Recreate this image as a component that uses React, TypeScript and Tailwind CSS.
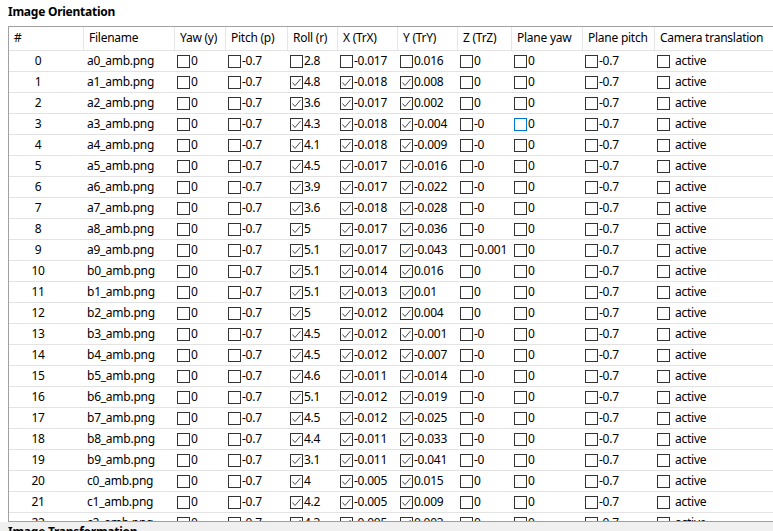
import React from "react";

type Row = [string, string, string, string, string];

// filename prefix, roll, X, Y, Z
const rows: Row[] = [
  ["a0", "2.8", "-0.017", "0.016", "0"],
  ["a1", "4.8", "-0.018", "0.008", "0"],
  ["a2", "3.6", "-0.017", "0.002", "0"],
  ["a3", "4.3", "-0.018", "-0.004", "-0"],
  ["a4", "4.1", "-0.018", "-0.009", "-0"],
  ["a5", "4.5", "-0.017", "-0.016", "-0"],
  ["a6", "3.9", "-0.017", "-0.022", "-0"],
  ["a7", "3.6", "-0.018", "-0.028", "-0"],
  ["a8", "5", "-0.017", "-0.036", "-0"],
  ["a9", "5.1", "-0.017", "-0.043", "-0.001"],
  ["b0", "5.1", "-0.014", "0.016", "0"],
  ["b1", "5.1", "-0.013", "0.01", "0"],
  ["b2", "5", "-0.012", "0.004", "0"],
  ["b3", "4.5", "-0.012", "-0.001", "-0"],
  ["b4", "4.5", "-0.012", "-0.007", "-0"],
  ["b5", "4.6", "-0.011", "-0.014", "-0"],
  ["b6", "5.1", "-0.012", "-0.019", "-0"],
  ["b7", "4.5", "-0.012", "-0.025", "-0"],
  ["b8", "4.4", "-0.011", "-0.033", "-0"],
  ["b9", "3.1", "-0.011", "-0.041", "-0"],
  ["c0", "4", "-0.005", "0.015", "0"],
  ["c1", "4.2", "-0.005", "0.009", "0"],
  ["c2", "4.3", "-0.005", "0.003", "0"],
];

const headers = [
  "#",
  "Filename",
  "Yaw (y)",
  "Pitch (p)",
  "Roll (r)",
  "X (TrX)",
  "Y (TrY)",
  "Z (TrZ)",
  "Plane yaw",
  "Plane pitch",
  "Camera translation",
];

const gridCols =
  "grid grid-cols-[75px_91px_51px_62px_50px_60px_60px_54px_71px_72px_140px]";

function Box({ checked = false, focus = false }: { checked?: boolean; focus?: boolean }) {
  return (
    <span
      className={
        "w-[13px] h-[13px] shrink-0 bg-white border flex items-center justify-center " +
        (focus ? "border-[#0078d7]" : "border-[#333333]")
      }
    >
      {checked && (
        <svg width="11" height="11" viewBox="0 0 11 11">
          <polyline
            points="1.5,5.5 4,8.5 9.5,2"
            fill="none"
            stroke="#4a4a4a"
            strokeWidth="1"
          />
        </svg>
      )}
    </span>
  );
}

function CheckCell({
  value,
  checked,
  focus,
}: {
  value: string;
  checked?: boolean;
  focus?: boolean;
}) {
  return (
    <div className="flex items-center pl-[2px] overflow-hidden whitespace-nowrap">
      <Box checked={checked} focus={focus} />
      <span className="ml-[1px]">{value}</span>
    </div>
  );
}

export default function App() {
  return (
    <div className="w-[773px] h-[531px] overflow-hidden bg-white text-black text-[12px] leading-4 font-['Noto_Sans',sans-serif] tracking-[-0.25px]">
      {/* Title */}
      <div className="h-[26px] pl-2 pt-[4px] font-bold">Image Orientation</div>

      {/* Table frame */}
      <div className="ml-2 w-[820px] h-[496px] border border-r-0 border-[#a0a0a0] overflow-hidden">
        {/* Header */}
        <div className={gridCols + " h-[24px] border-b border-[#e3e3e3]"}>
          {headers.map((h) => (
            <div
              key={h}
              className="flex items-center pl-[5px] pb-[2px] border-r border-[#e5e5e5] whitespace-nowrap overflow-hidden"
            >
              {h}
            </div>
          ))}
        </div>

        {/* Rows (the last one is cut by the frame) */}
        {rows.map((r, i) => {
          const last = i === rows.length - 1;
          return (
            <div
              key={i}
              className={
                gridCols +
                (last
                  ? " h-[8px] overflow-hidden items-start pt-[2px]"
                  : " h-[21px] border-b border-[#e3e3e3]")
              }
            >
              <div className="flex items-center pl-[21px]">
                <span className="w-[16px] text-center">{i}</span>
              </div>
              <div className="flex items-center pl-[3px]">{r[0]}_amb.png</div>
              <CheckCell value="0" />
              <CheckCell value="-0.7" />
              <CheckCell value={r[1]} checked={i > 0} />
              <CheckCell value={r[2]} checked={i > 0} />
              <CheckCell value={r[3]} checked={i > 0} />
              <CheckCell value={r[4]} />
              <CheckCell value="0" focus={i === 3} />
              <CheckCell value="-0.7" />
              <div className="flex items-center pl-[2px]">
                <Box />
                <span className="ml-[5px]">active</span>
              </div>
            </div>
          );
        })}
      </div>

      {/* Next section, cut off */}
      <div className="h-[9px] bg-[#f0f0f0] pl-2 pt-[2px] font-bold overflow-hidden">
        Image Transformation
      </div>
    </div>
  );
}
